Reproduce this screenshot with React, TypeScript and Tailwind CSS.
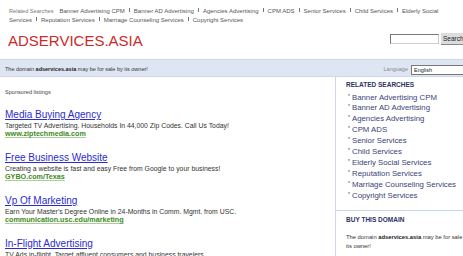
import React from 'react'

const TOP_LINKS = [
  'Banner Advertising CPM',
  'Banner AD Advertising',
  'Agencies Advertising',
  'CPM ADS',
  'Senior Services',
  'Child Services',
  'Elderly Social Services',
  'Reputation Services',
  'Marriage Counseling Services',
  'Copyright Services',
]

const LISTINGS = [
  {
    title: 'Media Buying Agency',
    desc: 'Targeted TV Advertising. Households In 44,000 Zip Codes. Call Us Today!',
    url: 'www.ziptechmedia.com',
  },
  {
    title: 'Free Business Website',
    desc: 'Creating a website is fast and easy Free from Google to your business!',
    url: 'GYBO.com/Texas',
  },
  {
    title: 'Vp Of Marketing',
    desc: "Earn Your Master's Degree Online in 24-Months in Comm. Mgmt. from USC.",
    url: 'communication.usc.edu/marketing',
  },
  {
    title: 'In-Flight Advertising',
    desc: 'TV Ads in-flight. Target affluent consumers and business travelers',
    url: 'www.inflightmedia.com',
  },
]

export default function App() {
  return (
    <div className="w-[463px] h-[256px] overflow-hidden bg-white font-['Liberation_Sans',Arial,sans-serif]">
      <div className="w-[500px]">
        {/* top related links */}
        <div className="pl-[9px] pr-[52px] pt-[7px] text-[6px] leading-[9px] text-[#555]">
          <span className="text-[5.6px] text-[#777] mr-[6px]">Related Searches</span>
          {TOP_LINKS.map((l, i) => (
            <React.Fragment key={l}>
              <span>{l}</span>
              {i < TOP_LINKS.length - 1 && (
                <span className="inline-block align-top mt-[1px] mx-[4px] w-[1px] h-[4px] bg-[#777]" />
              )}
            </React.Fragment>
          ))}
        </div>

        {/* title + search */}
        <div className="flex items-start mt-[7px] h-[27px]">
          <div className="pl-[8px] text-[15px] leading-[18px] text-[#cc2a2a]">
            ADSERVICES.ASIA
          </div>
          <div className="ml-auto flex items-center mt-[1px] mr-[25px] gap-[2px]">
            <div className="w-[49px] h-[10px] bg-white border border-[#777] border-r-[#ccc] border-b-[#ccc]" />
            <div className="w-[34px] h-[12px] bg-[#dcdcdc] border-b border-r border-[#888] text-[6.5px] leading-[12px] pl-[2px] text-[#222]">
              Search
            </div>
          </div>
        </div>

        {/* domain bar */}
        <div className="h-[18px] bg-[#dfe6f3] border-t border-b border-[#cdd7ec] flex items-center">
          <div className="pl-[5px] pt-[2px] text-[5.5px] text-[#333]">
            The domain <b className="text-[#222]">adservices.asia</b> may be for sale by its owner!
          </div>
          <div className="ml-auto flex items-center pt-[3px] mr-[29px]">
            <span className="text-[5.5px] text-[#888] mr-[3px]">Language</span>
            <div className="w-[60px] h-[10px] bg-white border border-[#777] text-[5.5px] leading-[9px] pl-[2px] text-[#222]">
              English
            </div>
          </div>
        </div>

        {/* main */}
        <div className="flex">
          <div className="w-[335px] shrink-0 pl-[5px] pt-[11px]">
            <div className="text-[5.6px] leading-[8px] text-[#444]">Sponsored listings</div>
            <div className="mt-[13px]">
              {LISTINGS.map((l) => (
                <div key={l.title} className="mb-[14px]">
                  <div className="text-[10px] leading-[12px] text-[#2b2bd0] underline underline-offset-[1px]">
                    {l.title}
                  </div>
                  <div className="text-[6.85px] leading-[9px] text-[#333] whitespace-nowrap">{l.desc}</div>
                  <div className="text-[7.2px] leading-[8px] font-bold text-[#3f8a22] underline decoration-[#a9cf96]">
                    {l.url}
                  </div>
                </div>
              ))}
            </div>
          </div>

          <div className="flex-1 border-l border-[#cdd7ec]">
            <div className="pl-[10px] pt-[3px] pb-[8px] border-b border-[#cdd7ec]">
              <div className="text-[6.5px] leading-[9px] font-bold text-[#2d3264]">RELATED SEARCHES</div>
              <div className="mt-[3.5px]">
                {TOP_LINKS.map((l) => (
                  <div key={l} className="flex text-[7.8px] leading-[10.9px] text-[#3a3f78] whitespace-nowrap">
                    <span className="text-[5px] leading-[7px] w-[6px] pl-[2px]">*</span>
                    <span>{l}</span>
                  </div>
                ))}
              </div>
            </div>
            <div className="pl-[10px] pt-[4px]">
              <div className="text-[6.5px] leading-[9px] font-bold text-[#2d3264]">BUY THIS DOMAIN</div>
              <div className="mt-[9px] w-[125px] text-[5.8px] leading-[9px] text-[#333]">
                The domain <b className="text-[#222]">adservices.asia</b> may be for sale by its owner!
              </div>
            </div>
          </div>
        </div>
      </div>
    </div>
  )
}
